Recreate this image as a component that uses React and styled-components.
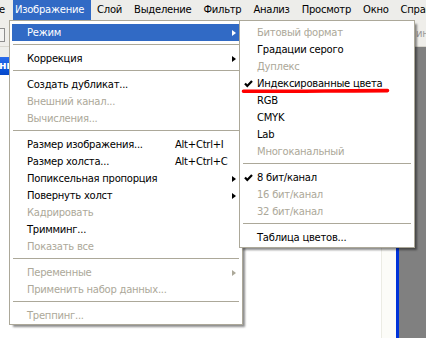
import styled, { createGlobalStyle } from "styled-components";

const GlobalStyle = createGlobalStyle`
    body{
        margin: 0;
        background: #FFFFFF;
    }
`;

const barItems = [
    { label: 'е', edge: true },
    { label: 'Изображение', active: true },
    { label: 'Слой' },
    { label: 'Выделение' },
    { label: 'Фильтр' },
    { label: 'Анализ' },
    { label: 'Просмотр' },
    { label: 'Окно' },
    { label: 'Справка' },
];

const mainItems = [
    { label: 'Режим', arrow: true, active: true },
    'sep',
    { label: 'Коррекция', arrow: true },
    'sep',
    { label: 'Создать дубликат...' },
    { label: 'Внешний канал...', disabled: true },
    { label: 'Вычисления...', disabled: true },
    'sep',
    { label: 'Размер изображения...', shortcut: 'Alt+Ctrl+I' },
    { label: 'Размер холста...', shortcut: 'Alt+Ctrl+C' },
    { label: 'Попиксельная пропорция', arrow: true },
    { label: 'Повернуть холст', arrow: true },
    { label: 'Кадрировать', disabled: true },
    { label: 'Тримминг...' },
    { label: 'Показать все', disabled: true },
    'sep',
    { label: 'Переменные', arrow: true, disabled: true },
    { label: 'Применить набор данных...', disabled: true },
    'sep',
    { label: 'Треппинг...', disabled: true },
];

const modeItems = [
    { label: 'Битовый формат', disabled: true },
    { label: 'Градации серого' },
    { label: 'Дуплекс', disabled: true },
    { label: 'Индексированные цвета', checked: true },
    { label: 'RGB' },
    { label: 'CMYK' },
    { label: 'Lab' },
    { label: 'Многоканальный', disabled: true },
    'sep',
    { label: '8 бит/канал', checked: true },
    { label: '16 бит/канал', disabled: true },
    { label: '32 бит/канал', disabled: true },
    'sep',
    { label: 'Таблица цветов...' },
];

function Check(){
    return (
        <svg width="9" height="8" viewBox="0 0 9 8">
            <path d="M1 3.5 L3.3 6 L8 1" fill="none" stroke="#000" strokeWidth="2.2" />
        </svg>
    );
}

function MenuList({ items, shortcutCol }){
    return items.map((it, i) => {
        if (it === 'sep') return <Separator key={i} />;
        return (
            <Row key={i} active={it.active} disabled={it.disabled} shortcutCol={shortcutCol}>
                <CheckCell>{it.checked && <Check />}</CheckCell>
                <Label>{it.label}</Label>
                <Shortcut>{it.shortcut}</Shortcut>
                <ArrowCell>{it.arrow && <Arrow active={it.active} disabled={it.disabled} />}</ArrowCell>
            </Row>
        );
    });
}

export default function App(){
    return (
        <>
            <GlobalStyle />
            <Screen>
                <MenuBar>
                    {barItems.map((b, i) => (
                        <BarItem key={i} active={b.active} edge={b.edge}>{b.label}</BarItem>
                    ))}
                </MenuBar>
                <OptionsBar>
                    <ToolButton />
                    <OptionText>инструменты</OptionText>
                </OptionsBar>
                <Workspace>
                    <DocWindow>
                        <WindowTop />
                        <TitleBar>ни</TitleBar>
                        <Canvas>
                            <CanvasArea />
                            <ScrollStrip />
                        </Canvas>
                    </DocWindow>
                </Workspace>

                <MainMenu>
                    <MenuList items={mainItems} shortcutCol={53} />
                </MainMenu>
                <SubMenu>
                    <MenuList items={modeItems} shortcutCol={0} />
                    <Underline width="150" height="8" viewBox="0 0 150 8">
                        <path d="M2.5 4.2 C 40 4.6, 100 3.6, 146.5 3.6" fill="none" stroke="#FF0000" strokeWidth="3.6" strokeLinecap="round" />
                    </Underline>
                </SubMenu>
            </Screen>
        </>
    );
}

const Screen = styled.div`
    position: relative;
    width: 426px;
    height: 338px;
    overflow: hidden;
    display: flex;
    flex-direction: column;
    font-family: "DejaVu Sans", "Liberation Sans", sans-serif;
    font-size: 10px;
    letter-spacing: -0.25px;
    color: #000;
`;

const MenuBar = styled.div`
    display: flex;
    height: 20px;
    background: #EDEDEA;
    white-space: nowrap;
    flex-shrink: 0;
`;

const BarItem = styled.div`
    padding: ${props => props.edge ? '0 8px 0 0' : props.active ? '0 7px 0 2px' : '0 6px'};
    margin-left: ${props => props.edge ? '-1px' : '0'};
    line-height: 20px;
    background: ${props => props.active ? '#316AC5' : 'transparent'};
    color: ${props => props.active ? '#FFF' : '#000'};
`;

const OptionsBar = styled.div`
    display: grid;
    grid-template-columns: 416px auto;
    align-items: center;
    height: 26px;
    background: #EFEEEA;
    border-bottom: 1px solid #D8D6CE;
    flex-shrink: 0;
`;

const ToolButton = styled.div`
    width: 13px;
    height: 12px;
    margin-left: -10px;
    margin-top: 3px;
    border: 1px solid #8E8E8E;
    background: #F4F4F2;
`;

const OptionText = styled.div`
    color: #9A9A9A;
    white-space: nowrap;
`;

const Workspace = styled.div`
    flex: 1;
    display: flex;
    background: #808080;
`;

const DocWindow = styled.div`
    width: 399px;
    display: flex;
    flex-direction: column;
    border-right: 3px solid #0033D9;
    box-sizing: border-box;
    background: #FFFFFF;
`;

const WindowTop = styled.div`
    height: 10px;
    background: #EEEEEA;
`;

const TitleBar = styled.div`
    height: 18px;
    background: linear-gradient(#2A6BEA, #0A55DD 60%, #0848C8);
    color: #FFF;
    font-weight: bold;
    font-size: 11px;
    line-height: 18px;
    margin-left: -1px;
`;

const Canvas = styled.div`
    flex: 1;
    display: flex;
`;

const CanvasArea = styled.div`
    flex: 1;
    background: #FFFFFF;
`;

const ScrollStrip = styled.div`
    width: 14px;
    background: #FCFCF8;
    border-left: 1px solid #ECECE4;
`;

const Menu = styled.div`
    position: absolute;
    top: 20px;
    box-sizing: border-box;
    background: #FFFFFF;
    border: 1px solid #ACA899;
    padding: 3px 2px 1px;
    box-shadow: 3px 3px 2px -1px rgba(0, 0, 0, 0.45);
    white-space: nowrap;
`;

const MainMenu = styled(Menu)`
    left: 9px;
    width: 234px;
    padding-bottom: 0;
`;

const SubMenu = styled(Menu)`
    left: 239px;
    width: 176px;
`;

const Row = styled.div`
    display: grid;
    grid-template-columns: 15px 1fr ${props => props.shortcutCol}px 12px;
    align-items: center;
    height: 17px;
    background: ${props => props.active ? '#316AC5' : 'transparent'};
    color: ${props => props.active ? '#FFF' : props.disabled ? '#ACA899' : '#000'};
`;

const CheckCell = styled.div`
    display: flex;
    align-items: center;
    padding-left: 2px;
`;

const Label = styled.div``;

const Shortcut = styled.div``;

const ArrowCell = styled.div`
    display: flex;
    align-items: center;
    padding-left: 4px;
`;

const Arrow = styled.div`
    width: 0;
    height: 0;
    border-top: 3.5px solid transparent;
    border-bottom: 3.5px solid transparent;
    border-left: 4px solid ${props => props.active ? '#FFF' : props.disabled ? '#ACA899' : '#000'};
`;

const Separator = styled.div`
    height: 1px;
    margin: 3px 1px 5px;
    background: #ACA899;
`;

const Underline = styled.svg`
    position: absolute;
    left: 1px;
    top: 66px;
`;
